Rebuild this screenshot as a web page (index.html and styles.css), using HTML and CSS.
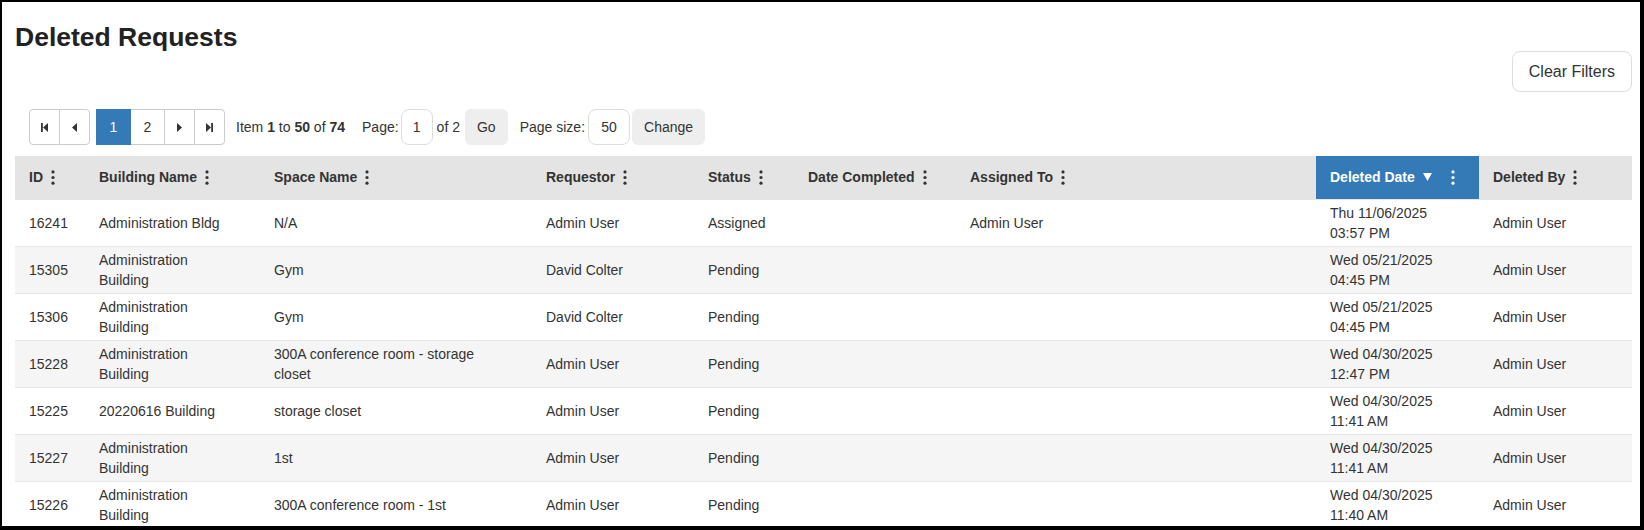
FILE: index.html
```html
<!DOCTYPE html>
<html lang="en">

<head>
    <meta charset="UTF-8">
    <meta name="viewport" content="width=device-width, initial-scale=1.0">
    <title>Deleted Requests</title>
    <link rel="stylesheet" href="styles.css">
</head>

<body>
    <div class="page">
        <h1>Deleted Requests</h1>

        <div class="toolbar">
            <button class="btn-clear">Clear Filters</button>
        </div>

        <div class="pager">
            <div class="pager-group">
                <button class="pager-btn" title="Go to the first page">
                    <svg width="7" height="9" viewBox="0 0 7 9"><rect x="0" y="0" width="1.8" height="9" fill="currentColor"/><polygon points="7,0 7,9 2,4.5" fill="currentColor"/></svg>
                </button>
                <button class="pager-btn" title="Go to the previous page">
                    <svg width="5" height="9" viewBox="0 0 5 9"><polygon points="5,0 5,9 0,4.5" fill="currentColor"/></svg>
                </button>
            </div>
            <div class="pager-group">
                <button class="pager-btn num active">1</button>
                <button class="pager-btn num">2</button>
                <button class="pager-btn" title="Go to the next page">
                    <svg width="5" height="9" viewBox="0 0 5 9"><polygon points="0,0 0,9 5,4.5" fill="currentColor"/></svg>
                </button>
                <button class="pager-btn" title="Go to the last page">
                    <svg width="7" height="9" viewBox="0 0 7 9"><polygon points="0,0 0,9 5,4.5" fill="currentColor"/><rect x="5.2" y="0" width="1.8" height="9" fill="currentColor"/></svg>
                </button>
            </div>
            <span class="pager-info">Item <b>1</b> to <b>50</b> of <b>74</b></span>
            <span class="pager-label">Page:</span>
            <input class="pager-input" type="text" value="1">
            <span>of 2</span>
            <button class="pager-action go">Go</button>
            <span class="pager-label size">Page size:</span>
            <input class="pager-input wide" type="text" value="50">
            <button class="pager-action">Change</button>
        </div>

        <table class="grid">
            <colgroup>
                <col style="width: 70px">
                <col style="width: 175px">
                <col style="width: 272px">
                <col style="width: 162px">
                <col style="width: 100px">
                <col style="width: 162px">
                <col style="width: 360px">
                <col style="width: 163px">
                <col style="width: 153px">
            </colgroup>
            <thead>
                <tr>
                    <th><span class="th-inner">ID <svg class="kebab" viewBox="0 0 4 16"><circle cx="2" cy="2" r="1.7"/><circle cx="2" cy="8" r="1.7"/><circle cx="2" cy="14" r="1.7"/></svg></span></th>
                    <th><span class="th-inner">Building Name <svg class="kebab" viewBox="0 0 4 16"><circle cx="2" cy="2" r="1.7"/><circle cx="2" cy="8" r="1.7"/><circle cx="2" cy="14" r="1.7"/></svg></span></th>
                    <th><span class="th-inner">Space Name <svg class="kebab" viewBox="0 0 4 16"><circle cx="2" cy="2" r="1.7"/><circle cx="2" cy="8" r="1.7"/><circle cx="2" cy="14" r="1.7"/></svg></span></th>
                    <th><span class="th-inner">Requestor <svg class="kebab" viewBox="0 0 4 16"><circle cx="2" cy="2" r="1.7"/><circle cx="2" cy="8" r="1.7"/><circle cx="2" cy="14" r="1.7"/></svg></span></th>
                    <th><span class="th-inner">Status <svg class="kebab" viewBox="0 0 4 16"><circle cx="2" cy="2" r="1.7"/><circle cx="2" cy="8" r="1.7"/><circle cx="2" cy="14" r="1.7"/></svg></span></th>
                    <th><span class="th-inner">Date Completed <svg class="kebab" viewBox="0 0 4 16"><circle cx="2" cy="2" r="1.7"/><circle cx="2" cy="8" r="1.7"/><circle cx="2" cy="14" r="1.7"/></svg></span></th>
                    <th><span class="th-inner">Assigned To <svg class="kebab" viewBox="0 0 4 16"><circle cx="2" cy="2" r="1.7"/><circle cx="2" cy="8" r="1.7"/><circle cx="2" cy="14" r="1.7"/></svg></span></th>
                    <th class="sorted"><span class="th-inner">Deleted Date <svg class="sort-arrow" viewBox="0 0 9 8"><polygon points="0,0 9,0 4.5,8"/></svg><svg class="kebab" viewBox="0 0 4 16"><circle cx="2" cy="2" r="1.7"/><circle cx="2" cy="8" r="1.7"/><circle cx="2" cy="14" r="1.7"/></svg></span></th>
                    <th><span class="th-inner">Deleted By <svg class="kebab" viewBox="0 0 4 16"><circle cx="2" cy="2" r="1.7"/><circle cx="2" cy="8" r="1.7"/><circle cx="2" cy="14" r="1.7"/></svg></span></th>
                </tr>
            </thead>
            <tbody>
                <tr>
                    <td>16241</td>
                    <td>Administration Bldg</td>
                    <td>N/A</td>
                    <td>Admin User</td>
                    <td>Assigned</td>
                    <td></td>
                    <td>Admin User</td>
                    <td>Thu 11/06/2025<br>03:57 PM</td>
                    <td>Admin User</td>
                </tr>
                <tr>
                    <td>15305</td>
                    <td>Administration Building</td>
                    <td>Gym</td>
                    <td>David Colter</td>
                    <td>Pending</td>
                    <td></td>
                    <td></td>
                    <td>Wed 05/21/2025<br>04:45 PM</td>
                    <td>Admin User</td>
                </tr>
                <tr>
                    <td>15306</td>
                    <td>Administration Building</td>
                    <td>Gym</td>
                    <td>David Colter</td>
                    <td>Pending</td>
                    <td></td>
                    <td></td>
                    <td>Wed 05/21/2025<br>04:45 PM</td>
                    <td>Admin User</td>
                </tr>
                <tr>
                    <td>15228</td>
                    <td>Administration Building</td>
                    <td>300A conference room - storage closet</td>
                    <td>Admin User</td>
                    <td>Pending</td>
                    <td></td>
                    <td></td>
                    <td>Wed 04/30/2025<br>12:47 PM</td>
                    <td>Admin User</td>
                </tr>
                <tr>
                    <td>15225</td>
                    <td>20220616 Building</td>
                    <td>storage closet</td>
                    <td>Admin User</td>
                    <td>Pending</td>
                    <td></td>
                    <td></td>
                    <td>Wed 04/30/2025<br>11:41 AM</td>
                    <td>Admin User</td>
                </tr>
                <tr>
                    <td>15227</td>
                    <td>Administration Building</td>
                    <td>1st</td>
                    <td>Admin User</td>
                    <td>Pending</td>
                    <td></td>
                    <td></td>
                    <td>Wed 04/30/2025<br>11:41 AM</td>
                    <td>Admin User</td>
                </tr>
                <tr>
                    <td>15226</td>
                    <td>Administration Building</td>
                    <td>300A conference room - 1st</td>
                    <td>Admin User</td>
                    <td>Pending</td>
                    <td></td>
                    <td></td>
                    <td>Wed 04/30/2025<br>11:40 AM</td>
                    <td>Admin User</td>
                </tr>
            </tbody>
        </table>
    </div>
</body>

</html>
```

FILE: styles.css
```css
/* General Reset */
* {
    box-sizing: border-box;
}

body {
    margin: 0;
    font-family: "Liberation Sans", Arial, sans-serif;
    font-size: 14px;
    color: #333;
    background: #fff;
}

.page {
    height: 530px;
    overflow: hidden;
    border: solid #000;
    border-width: 2px 4px 4px 2px;
    padding: 0 8px 0 13px;
}

h1 {
    margin: 20px 0 0;
    font-size: 26.5px;
    line-height: 30px;
    font-weight: bold;
    color: #222;
}

/* Toolbar */
.toolbar {
    display: flex;
    justify-content: flex-end;
    margin-top: -1px;
}

.btn-clear {
    height: 41px;
    padding: 0 16px;
    border: 1px solid #ddd;
    border-radius: 8px;
    background: #fff;
    font-family: inherit;
    font-size: 16px;
    color: #333;
}

/* Pager */
.pager {
    display: flex;
    align-items: center;
    height: 36px;
    margin: 17px 0 11px 14px;
}

.pager-group {
    display: flex;
}

.pager-group + .pager-group {
    margin-left: 6px;
}

.pager-btn {
    display: flex;
    align-items: center;
    justify-content: center;
    width: 31px;
    height: 36px;
    padding: 0;
    margin-left: -1px;
    border: 1px solid #ccc;
    background: #fff;
    color: #333;
    font-family: inherit;
    font-size: 14px;
}

.pager-btn:first-child {
    margin-left: 0;
    border-radius: 4px 0 0 4px;
}

.pager-btn:last-child {
    border-radius: 0 4px 4px 0;
}

.pager-btn.num {
    width: 35px;
}

.pager-btn.active {
    position: relative;
    z-index: 1;
    background: #337ab7;
    border-color: #337ab7;
    border-radius: 0;
    color: #fff;
}

.pager-info {
    margin-left: 11px;
}

.pager-info b {
    font-weight: bold;
}

.pager-label {
    margin-left: 17px;
}

.pager-label.size {
    margin-left: 12px;
}

.pager-input {
    width: 32px;
    height: 36px;
    margin: 0 4px 0 2px;
    padding: 0;
    border: 1px solid #ddd;
    border-radius: 8px;
    text-align: center;
    font-family: inherit;
    font-size: 14px;
    color: #333;
}

.pager-input.wide {
    width: 42px;
    margin: 0 2px 0 3px;
}

.pager-action {
    height: 36px;
    padding: 0 12px;
    border: none;
    border-radius: 6px;
    background: #eee;
    font-family: inherit;
    font-size: 14px;
    color: #333;
}

.pager-action.go {
    margin-left: 5px;
}

/* Grid */
.grid {
    width: 100%;
    border-collapse: collapse;
    table-layout: fixed;
}

.grid th {
    height: 43px;
    padding: 0 14px;
    background: #e4e4e4;
    text-align: left;
    font-weight: bold;
    white-space: nowrap;
}

.grid th.sorted {
    background: #337ab7;
    color: #fff;
}

.th-inner {
    display: inline-flex;
    align-items: center;
}

.kebab {
    width: 4px;
    height: 15px;
    margin-left: 8px;
    fill: currentColor;
}

.sort-arrow {
    width: 9px;
    height: 8px;
    margin: 0 11px 0 8px;
    fill: currentColor;
}

.grid td {
    padding: 3px 24px 3px 14px;
    line-height: 20px;
    border-top: 1px solid #e6e6e6;
    vertical-align: middle;
}

.grid tbody tr:nth-child(even) td {
    background: #f5f5f5;
}
```
